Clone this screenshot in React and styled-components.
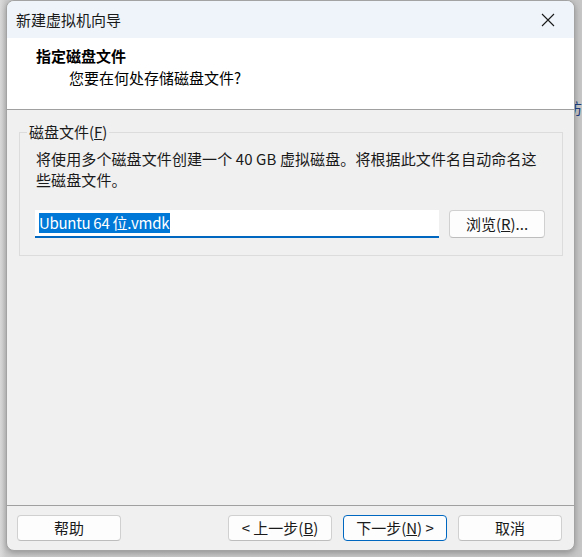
import React from 'react';
import styled, { createGlobalStyle } from 'styled-components';

const Global = createGlobalStyle`
  html, body { margin: 0; padding: 0; }
  body {
    background: #c8c8c8;
    font-family: "Noto Sans CJK SC", "Noto Sans", sans-serif;
    overflow: hidden;
  }
`;

const Desktop = styled.div`
  width: 582px;
  height: 557px;
  display: flex;
  align-items: flex-start;
  background: linear-gradient(to right, #dadada 0px, #cbcbcb 6px, #c6c6c6 100%);
  overflow: hidden;
`;

const Window = styled.div`
  margin-left: 6px;
  width: 569px;
  height: 551px;
  box-sizing: border-box;
  flex: none;
  display: flex;
  flex-direction: column;
  background: #f0f0f0;
  border: 1px solid #a3a3a3;
  border-radius: 8px;
  overflow: hidden;
  box-shadow: 0 2px 6px rgba(0, 0, 0, 0.28);
  color: #1a1a1a;
  font-size: 15px;
`;

const TitleBar = styled.div`
  height: 37px;
  flex: none;
  display: flex;
  align-items: center;
  padding-left: 9px;
  background: #eef4f9;
  font-size: 15px;
  line-height: 20px;
  color: #1a1a1a;
`;

const CloseButton = styled.div`
  margin-left: auto;
  width: 46px;
  height: 37px;
  display: flex;
  align-items: center;
  justify-content: center;
  margin-right: 3px;
`;

const Header = styled.div`
  height: 72px;
  flex: none;
  box-sizing: border-box;
  background: #ffffff;
  border-bottom: 1px solid #a0a0a0;
  padding: 8px 0 0 29px;
`;

const HeaderTitle = styled.div`
  font-weight: 700;
  font-size: 15px;
  line-height: 20px;
  color: #000;
`;

const HeaderSub = styled.div`
  margin-top: 2px;
  margin-left: 33px;
  font-size: 15px;
  line-height: 20px;
  color: #000;
`;

const Body = styled.div`
  flex: 1;
  padding: 12px 11px 0 12px;
`;

const Group = styled.fieldset`
  margin: 0;
  padding: 0 17px 17px 15px;
  border: 1px solid #dcdcdc;
  min-width: 0;
`;

const Legend = styled.legend`
  margin-left: -8px;
  padding: 0 2px;
  font-size: 15px;
  line-height: 20px;
  color: #1a1a1a;
`;

const Description = styled.div`
  margin-top: 6px;
  margin-left: 1px;
  width: 505px;
  font-size: 15px;
  line-height: 21px;
  color: #1a1a1a;
  letter-spacing: 0.1px;
`;

const FieldRow = styled.div`
  margin-top: 20px;
  display: flex;
  align-items: center;
  gap: 10px;
`;

const TextField = styled.div`
  width: 404px;
  height: 28px;
  box-sizing: border-box;
  background: #ffffff;
  border-bottom: 2px solid #0067c0;
  display: flex;
  align-items: center;
  padding-left: 4px;
  font-size: 15px;
`;

const Selected = styled.span`
  background: #0078d7;
  color: #ffffff;
  line-height: 20px;
  letter-spacing: -0.3px;
  padding: 0 1px 0 0;
`;

const Button = styled.div`
  width: ${p => p.$w || 104}px;
  height: ${p => p.$h || 26}px;
  box-sizing: border-box;
  flex: none;
  display: flex;
  align-items: center;
  justify-content: center;
  background: #fdfdfd;
  border: 1px solid ${p => (p.$primary ? '#0067c0' : '#d0d0d0')};
  border-bottom-color: ${p => (p.$primary ? '#0067c0' : '#bdbdbd')};
  border-radius: 4px;
  font-size: 15px;
  line-height: 20px;
  color: #1a1a1a;
  white-space: pre;
`;

const Footer = styled.div`
  flex: none;
  border-top: 1px solid #a0a0a0;
  padding: 9px 12px 9px 10px;
  display: flex;
  align-items: center;
  gap: 11px;
`;

const Spacer = styled.div`
  flex: 1;
`;

const EdgeStrip = styled.div`
  width: 7px;
  height: 557px;
  flex: none;
  overflow: hidden;
  padding-top: 98px;
  box-sizing: border-box;
  font-size: 15px;
  line-height: 20px;
  color: #1c3a78;
`;

const EdgeGlyph = styled.div`
  margin-left: -8px;
  white-space: nowrap;
`;

export default function App() {
  return (
    <>
      <Global />
      <Desktop>
        <Window>
          <TitleBar>
            新建虚拟机向导
            <CloseButton>
              <svg width="14" height="14" viewBox="0 0 14 14">
                <path d="M1 1 L13 13 M13 1 L1 13" stroke="#1a1a1a" strokeWidth="1.1" fill="none" />
              </svg>
            </CloseButton>
          </TitleBar>
          <Header>
            <HeaderTitle>指定磁盘文件</HeaderTitle>
            <HeaderSub>您要在何处存储磁盘文件?</HeaderSub>
          </Header>
          <Body>
            <Group>
              <Legend>
                磁盘文件(<u>F</u>)
              </Legend>
              <Description>
                将使用多个磁盘文件创建一个 40 GB 虚拟磁盘。将根据此文件名自动命名这些磁盘文件。
              </Description>
              <FieldRow>
                <TextField>
                  <Selected>Ubuntu 64 位.vmdk</Selected>
                </TextField>
                <Button $w={96} $h={28}>
                  浏览(<u>R</u>)...
                </Button>
              </FieldRow>
            </Group>
          </Body>
          <Footer>
            <Button>帮助</Button>
            <Spacer />
            <Button>
              {'< 上一步('}<u>B</u>)
            </Button>
            <Button $primary>
              下一步(<u>N</u>){' >'}
            </Button>
            <Button>取消</Button>
          </Footer>
        </Window>
        <EdgeStrip>
          <EdgeGlyph>访</EdgeGlyph>
        </EdgeStrip>
      </Desktop>
    </>
  );
}
